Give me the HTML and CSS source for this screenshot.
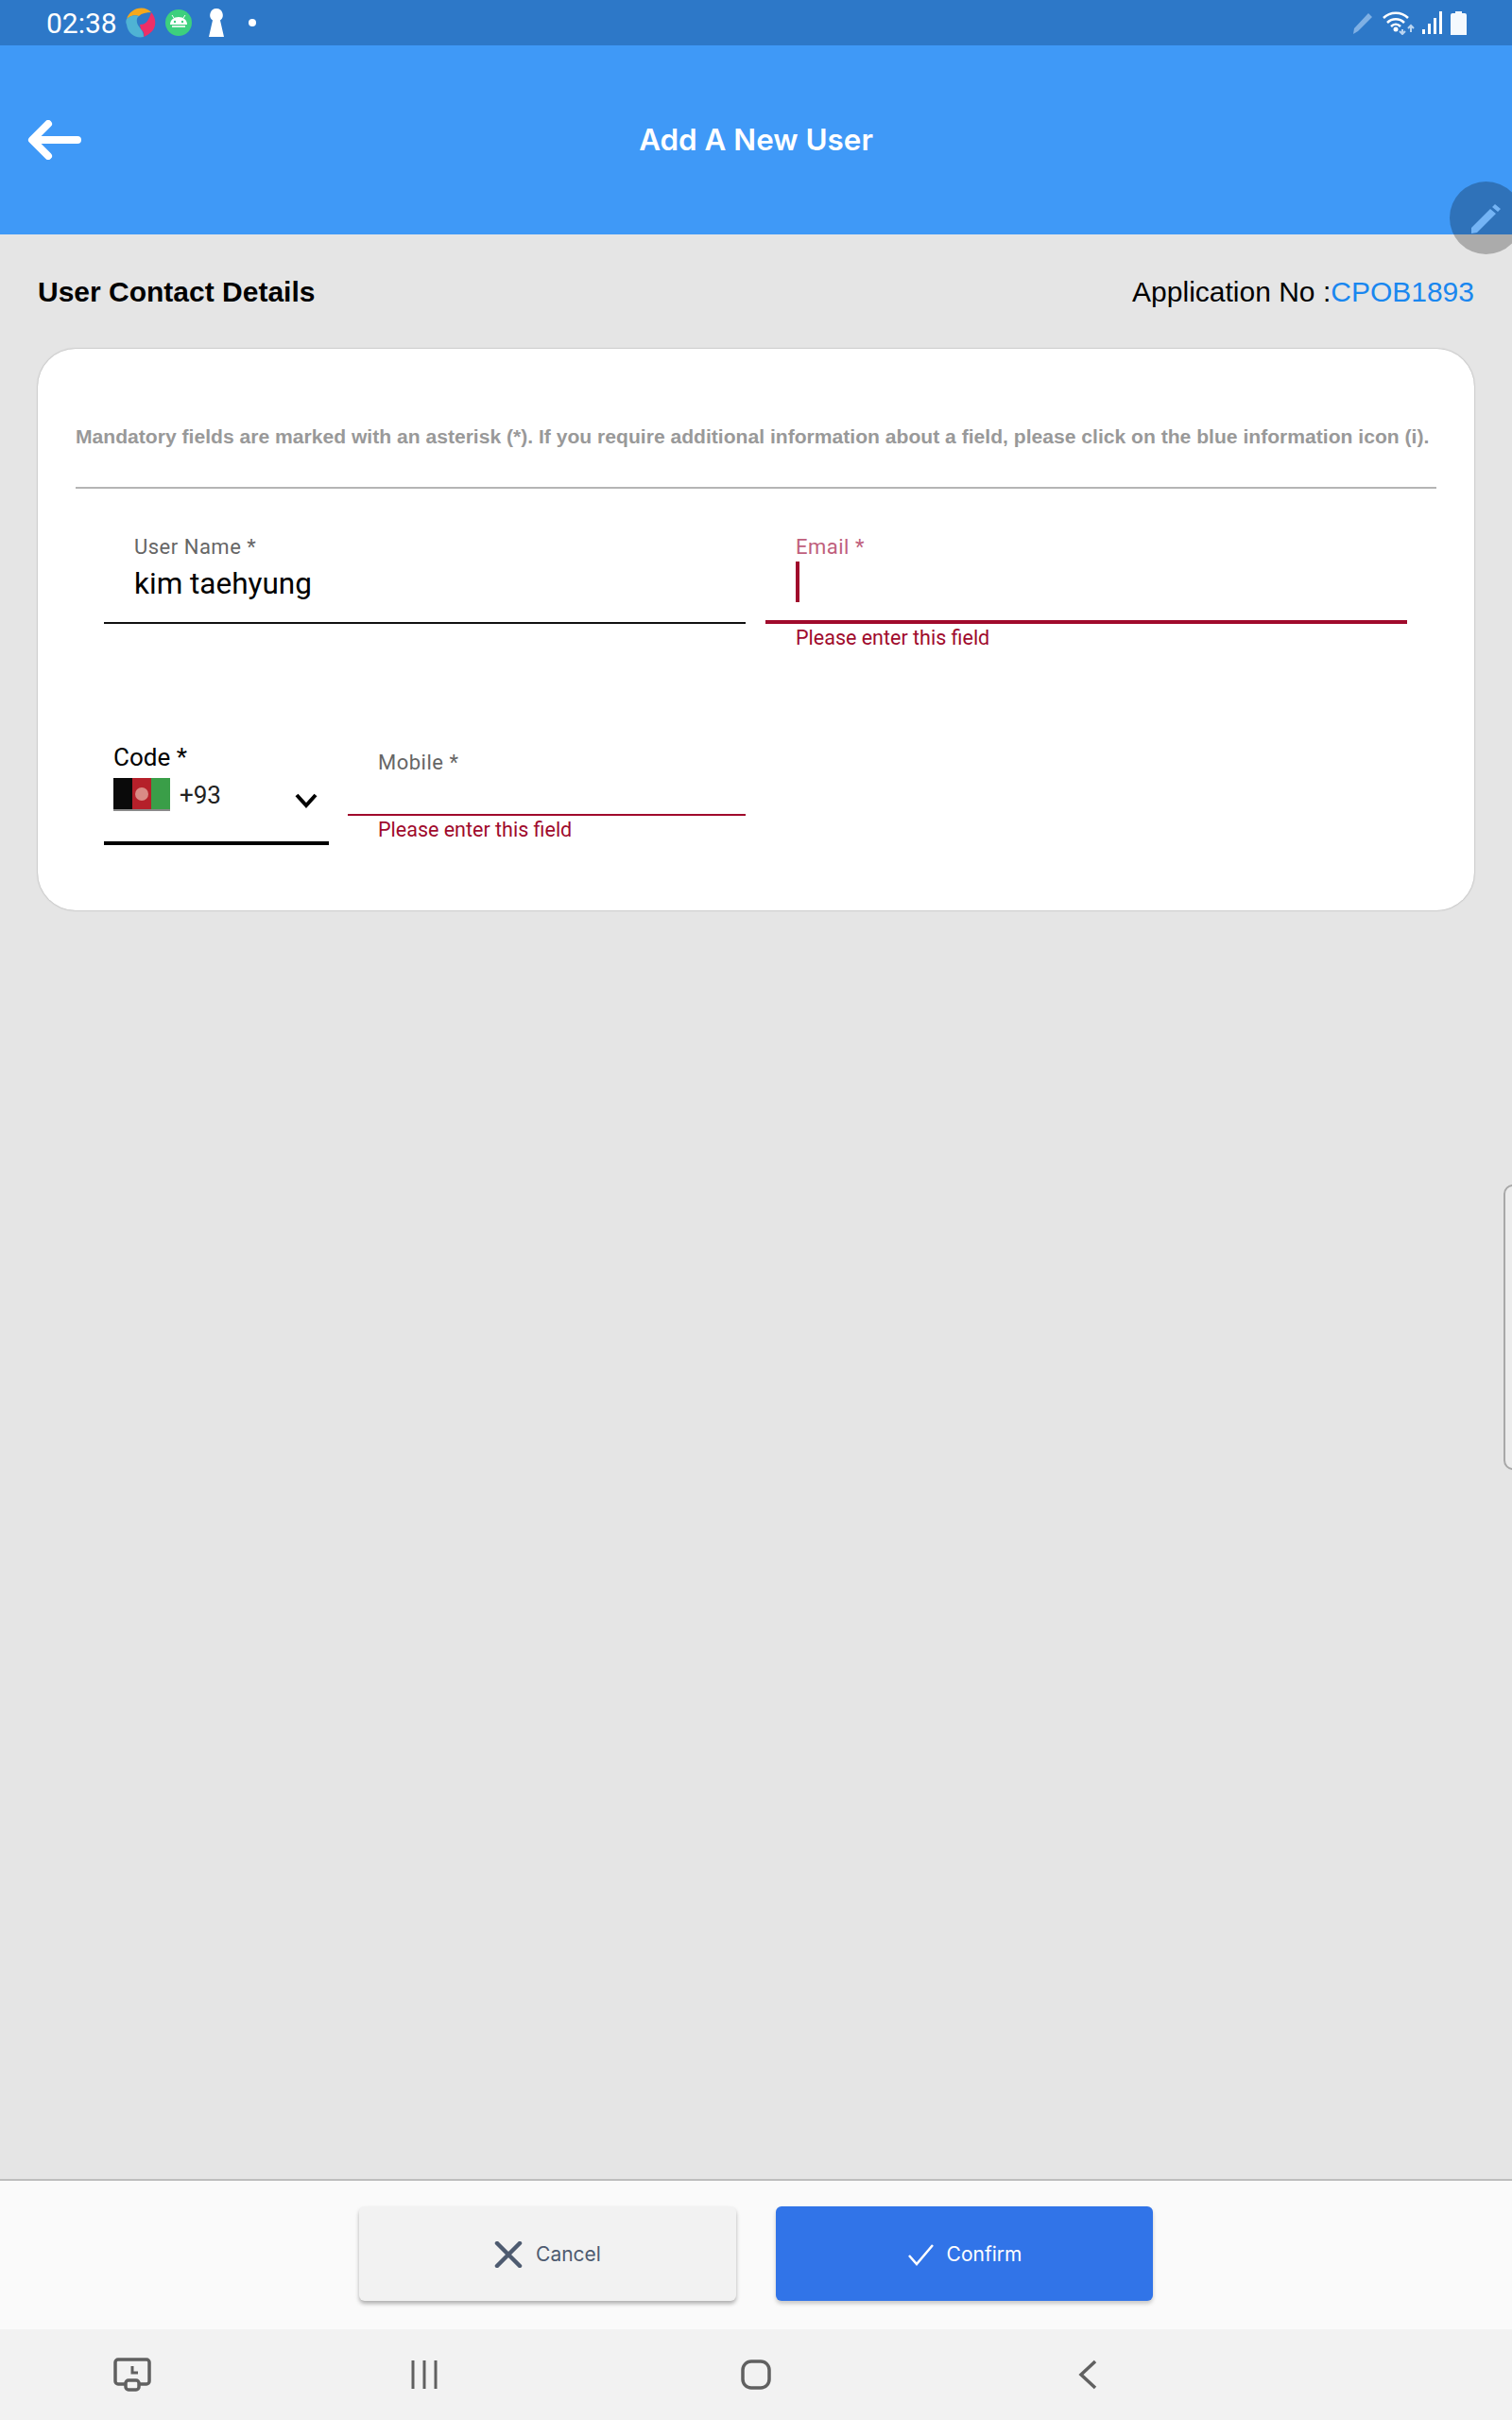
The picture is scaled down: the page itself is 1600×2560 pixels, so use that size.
FILE: index.html
```html
<!DOCTYPE html>
<html lang="en">
<head>
  <meta charset="UTF-8">
  <title>Add A New User</title>
  <link rel="stylesheet" href="styles.css">
</head>
<body>
  <div class="status-bar">
    <div class="status-left">
      <span class="time">02:38</span>
      <svg class="app-one" width="32" height="32" viewBox="0 0 32 32">
        <path d="M1 12C4 3 14-2 23 2c2 1 3 2 4 3-5 0-10 1-13 4-5-2-9 0-13 3z" fill="#f5a81c"/>
        <path d="M27 5c5 5 6 14 1 20-3 3-6 5-9 6 1-3 0-6-3-8l-1-5c6 0 9-3 12-13z" fill="#ee2f67"/>
        <path d="M1 12c4-3 8-5 13-3-3 2-3 7 0 11 2 3 5 5 5 11-9 2-17-4-18-13-1-2-1-4 0-6z" fill="#4fb3d4"/>
      </svg>
      <svg class="app-two" width="28" height="28" viewBox="0 0 28 28">
        <circle cx="14" cy="14" r="14" fill="#3dd07e"/>
        <path d="M5 16c0-5 4-8 9-8s9 3 9 8z" fill="#fff"/>
        <path d="M7 17h14v2H7z" fill="#d8f5e4"/>
        <path d="M9 9L7 6M19 9l2-3" stroke="#fff" stroke-width="1"/>
        <circle cx="10" cy="13" r="1.200" fill="#3dd07e"/>
        <circle cx="18" cy="13" r="1.200" fill="#3dd07e"/>
      </svg>
      <svg class="app-three" width="16" height="30" viewBox="0 0 16 30">
        <path d="M8 0a7 7 0 0 1 4 12.600L16 30H0l4-17.400A7 7 0 0 1 8 0z" fill="#fff"/>
      </svg>
      <span class="dot"></span>
    </div>
    <div class="status-right">
      <svg width="24" height="26" viewBox="0 0 24 26">
        <path d="M17 3l4 4L6 22l-5 3 1-6z" fill="#7fb0e4"/>
      </svg>
      <svg width="34" height="26" viewBox="0 0 34 26" fill="none">
        <path d="M1 8c7-7 19-7 26 0M5 13c5-5 13-5 18 0M9 17c3-3 7-3 10 0" stroke="#fff" stroke-width="2.500"/>
        <circle cx="14" cy="20" r="2.500" fill="#fff"/>
        <path d="M21 20v5m-3-3l3 3 3-3M30 23v-7m-3 3l3-3 3 3" stroke="#b9d4f0" stroke-width="2"/>
      </svg>
      <svg width="22" height="24" viewBox="0 0 22 24">
        <rect x="0" y="19" width="3" height="5" fill="#fff"/>
        <rect x="6" y="13" width="3" height="11" fill="#fff"/>
        <rect x="12" y="7" width="3" height="17" fill="#fff"/>
        <rect x="18" y="0" width="3" height="24" fill="#fff"/>
      </svg>
      <svg width="17" height="25" viewBox="0 0 17 25">
        <path d="M5 0h7v2h3a2 2 0 0 1 2 2v21H0V4a2 2 0 0 1 2-2h3z" fill="#f4f9fe"/>
      </svg>
    </div>
  </div>

  <header class="app-bar">
    <svg class="back-arrow" width="58" height="42" viewBox="0 0 58 42" fill="none">
      <path d="M53 21H6M22 4L5 21l17 17" stroke="#fff" stroke-width="8" stroke-linecap="round" stroke-linejoin="round"/>
    </svg>
    <h1 class="page-title">Add A New User</h1>
  </header>

  <main class="content">
    <div class="section-head">
      <h2 class="section-title">User Contact Details</h2>
      <p class="app-no">Application No :<span class="app-code">CPOB1893</span></p>
    </div>

    <section class="card">
      <p class="note">Mandatory fields are marked with an asterisk (*). If you require additional information about a field, please click on the blue information icon (i).</p>
      <div class="form-row">
        <div class="field">
          <label class="field-label">User Name *</label>
          <div class="field-value">kim taehyung</div>
        </div>
        <div class="field field-error">
          <label class="field-label">Email *</label>
          <div class="field-value"><span class="caret"></span></div>
          <p class="error-text">Please enter this field</p>
        </div>
      </div>
      <div class="form-row phone-row">
        <div class="code-field">
          <label class="code-label">Code *</label>
          <div class="code-select">
            <svg class="flag" width="60" height="35" viewBox="0 0 60 35">
              <rect width="20" height="35" fill="#0a0a0a"/>
              <rect x="20" width="20" height="35" fill="#b5202a"/>
              <rect x="40" width="20" height="35" fill="#3a9e48"/>
              <circle cx="30" cy="17" r="7" fill="#d98a85"/>
              <rect y="33" width="60" height="2" fill="#8a8a8a"/>
            </svg>
            <span class="code-num">+93</span>
            <svg class="chevron" width="24" height="16" viewBox="0 0 24 16" fill="none">
              <path d="M2 2l10 11L22 2" stroke="#000" stroke-width="4"/>
            </svg>
          </div>
        </div>
        <div class="mobile-field">
          <label class="field-label">Mobile *</label>
          <div class="mobile-input"></div>
          <p class="error-text">Please enter this field</p>
        </div>
      </div>
    </section>
  </main>

  <footer class="action-bar">
    <button class="btn btn-cancel">
      <svg width="30" height="28" viewBox="0 0 30 28" fill="none">
        <path d="M3 2l24 24M27 2L3 26" stroke="#4e5b70" stroke-width="4.500" stroke-linecap="round"/>
      </svg>
      Cancel
    </button>
    <button class="btn btn-confirm">
      <svg width="28" height="24" viewBox="0 0 28 24" fill="none">
        <path d="M2 13l8 9L27 2" stroke="#fff" stroke-width="2.500"/>
      </svg>
      Confirm
    </button>
  </footer>

  <nav class="nav-bar">
    <svg width="40" height="36" viewBox="0 0 40 36" fill="none">
      <path d="M12 28H5a3 3 0 0 1-3-3V5a3 3 0 0 1 3-3h30a3 3 0 0 1 3 3v20a3 3 0 0 1-3 3h-7" stroke="#606060" stroke-width="3.500"/>
      <rect x="13" y="24" width="14" height="10" rx="3" stroke="#606060" stroke-width="3.500"/>
      <path d="M20 9v7h6" stroke="#606060" stroke-width="3"/>
    </svg>
    <svg width="30" height="30" viewBox="0 0 30 30" fill="none">
      <path d="M3 0v30M15 0v30M27 0v30" stroke="#606060" stroke-width="3"/>
    </svg>
    <svg width="32" height="32" viewBox="0 0 32 32" fill="none">
      <rect x="2" y="2" width="28" height="28" rx="9" stroke="#606060" stroke-width="3.500"/>
    </svg>
    <svg width="20" height="32" viewBox="0 0 20 32" fill="none">
      <path d="M18 2L3 16l15 14" stroke="#606060" stroke-width="3.500"/>
    </svg>
  </nav>

  <div class="fab">
    <svg width="36" height="36" viewBox="0 0 36 36">
      <path d="M28 4l6 5-3 3-6-5zM23 9l6 5L9 34l-6 1 0-6z" fill="#74b4f5"/>
    </svg>
  </div>
  <div class="edge-handle"></div>
</body>
</html>
```

FILE: styles.css
```css
html, body {
  margin: 0;
  padding: 0;
}
body {
  position: relative;
  display: flex;
  flex-direction: column;
  height: 2560px;
  overflow: hidden;
  background-color: #e5e5e5;
  font-family: "Liberation Sans", Arial, sans-serif;
}
h1, h2, p {
  margin: 0;
}

/* status bar */
.status-bar {
  display: flex;
  justify-content: space-between;
  align-items: center;
  height: 48px;
  padding: 0 48px 0 49px;
  background-color: #2d78c8;
  color: #fff;
}
.status-left {
  display: flex;
  align-items: center;
}
.time {
  font-family: Roboto, sans-serif;
  font-size: 30px;
  margin-right: 9px;
}
.app-two {
  margin-left: 10px;
}
.app-three {
  margin-left: 18px;
}
.dot {
  width: 8px;
  height: 8px;
  margin-left: 26px;
  border-radius: 50%;
  background-color: #fff;
}
.status-right {
  display: flex;
  align-items: center;
  gap: 8px;
}

/* app bar */
.app-bar {
  display: flex;
  align-items: center;
  justify-content: center;
  position: relative;
  height: 200px;
  background-color: #3f99f7;
}
.back-arrow {
  position: absolute;
  left: 29px;
  top: 79px;
}
.page-title {
  font-family: Inter, sans-serif;
  font-size: 31.400px;
  font-weight: 600;
  color: #fff;
}

/* content */
.content {
  flex: 1;
  padding: 0 40px;
}
.section-head {
  display: flex;
  justify-content: space-between;
  align-items: center;
  height: 121px;
}
.section-title {
  font-size: 30px;
  font-weight: bold;
  color: #000;
}
.app-no {
  font-size: 30px;
  color: #000;
}
.app-code {
  color: #1a87ef;
}
.card {
  box-sizing: border-box;
  height: 594px;
  padding: 77px 40px 0;
  background-color: #fff;
  border-radius: 40px;
  box-shadow: 0 0 2px rgba(0, 0, 0, 0.35);
}
.note {
  height: 69px;
  border-bottom: 2px solid #b5b5b5;
  font-size: 21.100px;
  font-weight: bold;
  line-height: 32px;
  color: #999;
  white-space: nowrap;
}
.form-row {
  display: flex;
  gap: 21px;
  margin: 0 30px;
  padding-top: 49px;
}
.field {
  position: relative;
  box-sizing: border-box;
  width: 679px;
  height: 94px;
  padding: 0 32px;
  border-bottom: 2px solid #111;
}
.field-label {
  display: block;
  font-family: Roboto, sans-serif;
  font-size: 22px;
  line-height: 26px;
  letter-spacing: 0.5px;
  color: #666;
}
.field-value {
  height: 48px;
  margin-top: 2px;
  font-family: Roboto, sans-serif;
  font-size: 31.500px;
  line-height: 47px;
  color: #000;
}
.caret {
  display: block;
  width: 4px;
  height: 43px;
  margin-top: 2px;
  background-color: #a00a2c;
}
.field-error {
  border-bottom: 4px solid #a00a2c;
}
.field-error .field-label {
  color: #c0607c;
}
.error-text {
  position: absolute;
  left: 32px;
  top: 96px;
  font-family: Roboto, sans-serif;
  font-size: 21.500px;
  line-height: 26px;
  color: #a00a2c;
}
.phone-row {
  gap: 20px;
  padding-top: 127px;
}
.code-field {
  box-sizing: border-box;
  width: 238px;
  height: 107px;
  padding: 0 10px;
  border-bottom: 4px solid #000;
}
.code-label {
  display: block;
  margin-top: -1px;
  font-family: Roboto, sans-serif;
  font-size: 26px;
  line-height: 30px;
  color: #000;
}
.code-select {
  display: flex;
  align-items: center;
  margin-top: 7px;
}
.code-num {
  margin-left: 10px;
  font-family: Roboto, sans-serif;
  font-size: 26px;
  color: #222;
}
.chevron {
  margin: 12px 0 0 auto;
  position: relative;
  left: -2px;
}
.mobile-field {
  position: relative;
  box-sizing: border-box;
  width: 421px;
  padding: 0 32px;
}
.mobile-field .field-label {
  padding-top: 7px;
}
.mobile-input {
  position: absolute;
  left: 0;
  right: 0;
  top: 74px;
  height: 2px;
  background-color: #a00a2c;
}
.mobile-field .error-text {
  top: 78px;
}

/* bottom buttons */
.action-bar {
  display: flex;
  justify-content: center;
  gap: 42px;
  box-sizing: border-box;
  height: 159px;
  padding-top: 27px;
  border-top: 2px solid #bdbdbd;
  background-color: #fafafa;
}
.btn {
  display: flex;
  align-items: center;
  justify-content: center;
  gap: 14px;
  width: 399px;
  height: 100px;
  padding-top: 2px;
  border: none;
  border-radius: 6px;
  font-family: Inter, sans-serif;
  font-size: 21px;
  cursor: pointer;
}
.btn-cancel {
  background-color: #f2f2f2;
  color: #4e5b70;
  box-shadow: 0 3px 4px rgba(0, 0, 0, 0.3);
}
.btn-confirm {
  background-color: #3174e8;
  color: #fff;
  box-shadow: 0 3px 4px rgba(0, 0, 0, 0.2);
}

/* nav bar */
.nav-bar {
  display: grid;
  grid-template-columns: 280px 338px 364px 338px;
  justify-items: center;
  align-items: center;
  height: 96px;
  background-color: #f2f2f2;
}

/* overlays */
.fab {
  position: absolute;
  left: 1534px;
  top: 192px;
  width: 77px;
  height: 77px;
  border-radius: 50%;
  background-color: rgba(0, 0, 0, 0.25);
}
.fab svg {
  position: absolute;
  left: 20px;
  top: 20px;
}
.edge-handle {
  position: absolute;
  left: 1591px;
  top: 1253px;
  width: 20px;
  height: 298px;
  border: 2px solid #a8a8a8;
  border-radius: 10px;
  background-color: #ececec;
}
```
